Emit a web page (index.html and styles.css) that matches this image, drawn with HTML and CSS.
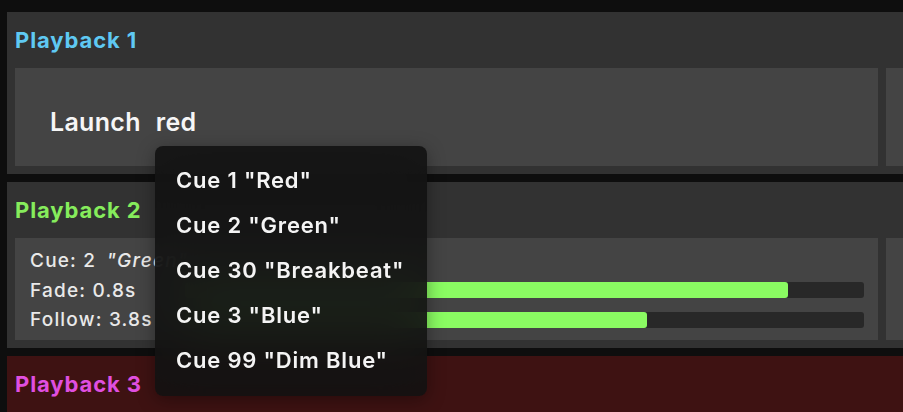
FILE: index.html
```html
<!DOCTYPE html>
<html>
<head>
<meta charset="utf-8">
<link rel="stylesheet" href="styles.css">
</head>
<body>
<div class="app">
  <section class="panel">
    <h2 class="title blue">Playback 1</h2>
    <div class="row">
      <div class="box launch-box">
        <span class="launch">Launch</span><span class="launch">red</span>
      </div>
      <div class="box"></div>
    </div>
  </section>
  <section class="panel">
    <h2 class="title green">Playback 2</h2>
    <div class="row">
      <div class="box status-box">
        <div class="status">
          <div class="label">Cue: 2 <em>"Green"</em></div>
          <div></div>
          <div class="label">Fade: 0.8s</div>
          <div class="bar"><div class="fill" style="width: 88.8%"></div></div>
          <div class="label">Follow: 3.8s</div>
          <div class="bar"><div class="fill" style="width: 68%"></div></div>
        </div>
      </div>
      <div class="box"></div>
    </div>
  </section>
  <section class="panel red">
    <h2 class="title magenta">Playback 3</h2>
  </section>

  <ul class="menu">
    <li>Cue 1 "Red"</li>
    <li>Cue 2 "Green"</li>
    <li>Cue 30 "Breakbeat"</li>
    <li>Cue 3 "Blue"</li>
    <li>Cue 99 "Dim Blue"</li>
  </ul>
</div>
</body>
</html>
```
FILE: styles.css
```css
* { box-sizing: border-box; }
html, body {
  margin: 0;
  background: #0e0e0e;
  font-family: Inter, "Noto Sans", sans-serif;
  overflow: hidden;
}
.app {
  position: relative;
  padding: 12px 0 0 7px;
  display: flex;
  flex-direction: column;
  gap: 8px;
  height: 412px;
}
.panel {
  background: #323232;
  padding: 0 0 8px 8px;
  overflow: hidden;
}
.panel.red {
  background: #3e1212;
  flex: 1;
}
.title {
  margin: 0;
  height: 56px;
  padding: 16px 0 0 0;
  font-size: 22px;
  line-height: 24px;
  font-weight: 700;
  letter-spacing: 0.9px;
  white-space: nowrap;
}
.blue { color: #5fc9f3; }
.green { color: #86ec5c; }
.magenta { color: #e04fe0; }
.row {
  display: flex;
  gap: 8px;
}
.box {
  flex: 0 0 863px;
  background: #444444;
}
.launch-box {
  height: 98px;
  display: flex;
  align-items: center;
  gap: 15px;
  padding: 10px 0 0 35px;
}
.launch {
  color: #f6f6f6;
  font-size: 25px;
  font-weight: 600;
  letter-spacing: 0.3px;
}
.status-box {
  height: 102px;
  padding: 8px 14px 0 15px;
}
.status {
  display: grid;
  grid-template-columns: 155px 1fr;
  grid-auto-rows: 29.5px;
  align-items: center;
  color: #e9e9e9;
  font-size: 19px;
  font-weight: 500;
  letter-spacing: 1.2px;
  white-space: nowrap;
}
.label em { font-style: italic; margin-left: 4px; }
.bar {
  height: 16px;
  background: #282828;
  border-radius: 3px;
  overflow: hidden;
}
.fill {
  height: 100%;
  background: #8afb62;
  border-radius: 3px;
}
.menu {
  position: absolute;
  left: 155px;
  top: 146px;
  width: 272px;
  height: 250px;
  margin: 0;
  padding: 12px 0 0 21px;
  list-style: none;
  background: rgba(18, 18, 18, 0.9);
  backdrop-filter: blur(24px);
  border-radius: 8px;
  box-shadow: 0 4px 18px rgba(0, 0, 0, 0.35);
}
.menu li {
  color: #f4f4f4;
  font-size: 22px;
  font-weight: 600;
  letter-spacing: 0.8px;
  height: 45px;
  line-height: 45px;
  white-space: nowrap;
}
```
